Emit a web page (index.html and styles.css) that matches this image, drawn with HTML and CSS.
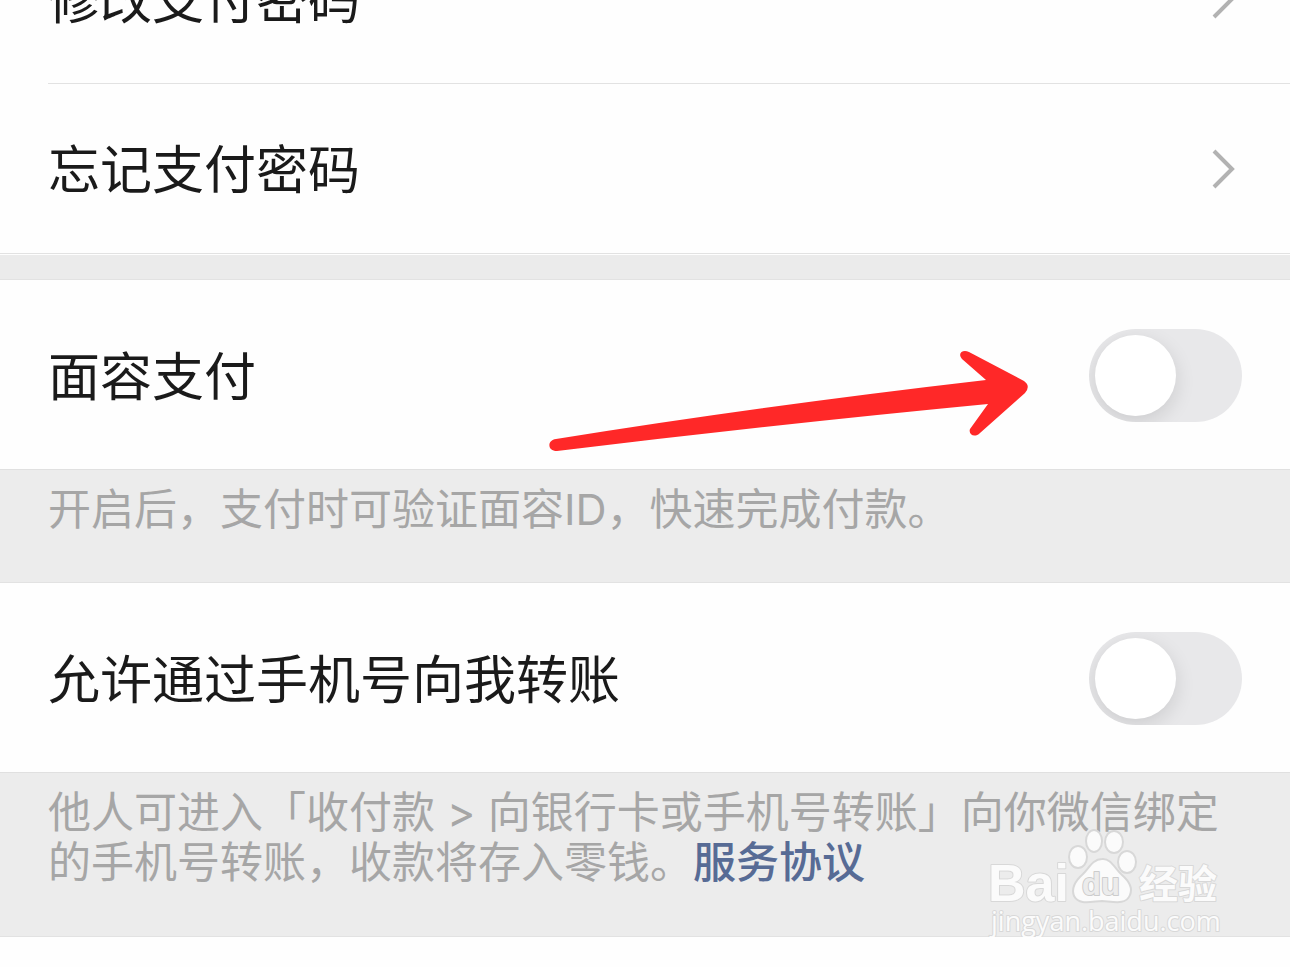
FILE: index.html
```html
<!DOCTYPE html>
<html lang="zh-CN">
<head>
<meta charset="utf-8">
<meta name="viewport" content="width=device-width, initial-scale=1">
<title>支付设置</title>
<link rel="stylesheet" href="styles.css">
</head>
<body>
<main class="settings">
  <nav class="group">
    <a class="row row-link" href="#change">
      <span class="row-title">修改支付密码</span>
      <svg class="chevron" viewBox="0 0 24 40" aria-hidden="true"><path d="M2 2 20 20 2 38"/></svg>
    </a>
    <a class="row row-link" href="#forgot">
      <span class="row-title">忘记支付密码</span>
      <svg class="chevron" viewBox="0 0 24 40" aria-hidden="true"><path d="M2 2 20 20 2 38"/></svg>
    </a>
  </nav>
  <div class="gap"></div>
  <section class="group">
    <div class="row row-switch">
      <label class="row-title" for="face-pay">面容支付</label>
      <input class="switch" type="checkbox" role="switch" id="face-pay">
      <svg class="arrow" viewBox="0 0 480 102" aria-hidden="true"><path d="M7 89Q212 56 437 30L413 9C408 3 414 -1 420 2L475 31Q482 36 476 43L431 83C426 88 419 85 421 79L439 54Q230 74 8 101C-2 101-2 90 7 89Z"/></svg>
    </div>
  </section>
  <p class="note">开启后，支付时可验证面容ID，快速完成付款。</p>
  <section class="group">
    <div class="row row-switch">
      <label class="row-title" for="phone-transfer">允许通过手机号向我转账</label>
      <input class="switch" type="checkbox" role="switch" id="phone-transfer">
    </div>
  </section>
  <div class="note note-last">
    <p class="note-text">他人可进入「收付款 &gt; 向银行卡或手机号转账」向你微信绑定的手机号转账，收款将存入零钱。<a class="terms" href="#terms">服务协议</a></p>
    <svg class="watermark" viewBox="0 0 236 116" role="img" aria-label="Baidu 经验">
      <text class="wm-brand" x="2" y="75">Bai</text>
      <g class="wm-paw">
        <ellipse cx="92" cy="31" rx="9" ry="11"/>
        <ellipse cx="108" cy="15" rx="8" ry="11"/>
        <ellipse cx="128" cy="16" rx="9" ry="11"/>
        <ellipse cx="141" cy="36" rx="9" ry="11"/>
        <path d="M116 33C125 32 129 43 136 49C144 56 147 62 144 69C140 79 129 76 116 75C103 76 93 79 88 70C85 62 89 55 97 48C103 42 107 33 116 33Z"/>
      </g>
      <text class="wm-du" x="96" y="69">du</text>
      <text class="wm-cjk" x="153" y="72">经验</text>
      <text class="wm-url" x="5" y="105">jingyan.baidu.com</text>
    </svg>
  </div>
</main>
</body>
</html>
```
FILE: styles.css
```css
* {
  box-sizing: border-box;
}

body {
  margin: 0;
  background: #fefefe;
  color: #1a1a1a;
  font-family: Inter, "Noto Sans CJK SC", sans-serif;
  overflow: hidden;
}

/* The list is scrolled so that its first row is partly out of view. */
.settings {
  margin-top: -86px;
}

.row {
  position: relative;
  display: flex;
  align-items: center;
  justify-content: space-between;
  margin-left: 48px;
  padding-right: 48px;
  font-size: 52px;
  line-height: 76px;
}

.row-title {
  padding-top: 4px;
}

.row-link {
  min-height: 170px;
  padding-right: 54px;
  color: inherit;
  text-decoration: none;
  border-bottom: 1px solid #e2e2e2;
}

.row-link:last-child {
  margin-left: 0;
  padding-left: 48px;
}

.row-switch {
  min-height: 189px;
  padding-top: 2px;
}

.chevron {
  width: 24px;
  height: 40px;
  fill: none;
  stroke: #b2b2b2;
  stroke-width: 4;
}

.gap {
  height: 26px;
  background: #ebebeb;
  border-top: 1px solid #fefefe;
  border-bottom: 1px solid #e2e2e2;
}

.switch {
  appearance: none;
  width: 153px;
  height: 93px;
  margin: 0;
  padding: 6px;
  border-radius: 47px;
  background: #e8e8ea;
  overflow: hidden;
}

.switch::before {
  content: "";
  display: block;
  width: 81px;
  height: 81px;
  border-radius: 50%;
  background: #fff;
  box-shadow: 0 6px 20px rgba(0, 0, 0, 0.12);
}

.switch:checked {
  background: #07c160;
}

.switch:checked::before {
  margin-left: auto;
}

.arrow {
  position: absolute;
  top: 70px;
  right: 261px;
  width: 480px;
  height: 102px;
  fill: #ff2828;
  overflow: visible;
  pointer-events: none;
}

.note {
  position: relative;
  min-height: 114px;
  margin: 0;
  padding: 14px 48px;
  background: #ececec;
  border-top: 1px solid #e0e0e0;
  border-bottom: 1px solid #e2e2e2;
  color: #a6a6a6;
  font-size: 43px;
  line-height: 50px;
}

.note-last {
  min-height: 165px;
}

.note-text {
  margin: 0;
}

.terms {
  color: #576b95;
  font-weight: 500;
  text-decoration: none;
}

.watermark {
  position: absolute;
  right: 68px;
  bottom: -6px;
  width: 236px;
  height: 116px;
  fill: #fbfbfb;
  stroke: #d8d8d8;
  stroke-width: 2;
  stroke-linejoin: round;
  overflow: visible;
  pointer-events: none;
}

.watermark text {
  paint-order: stroke;
}

.wm-brand {
  font: bold 52px "Liberation Sans", sans-serif;
}

.wm-du {
  font: bold 31px "Liberation Sans", sans-serif;
  fill: #ececec;
  stroke: #cccccc;
}

.wm-cjk {
  font: bold 39px "Noto Sans CJK SC", sans-serif;
}

.wm-url {
  font: 27px "Open Sans", sans-serif;
}
```
